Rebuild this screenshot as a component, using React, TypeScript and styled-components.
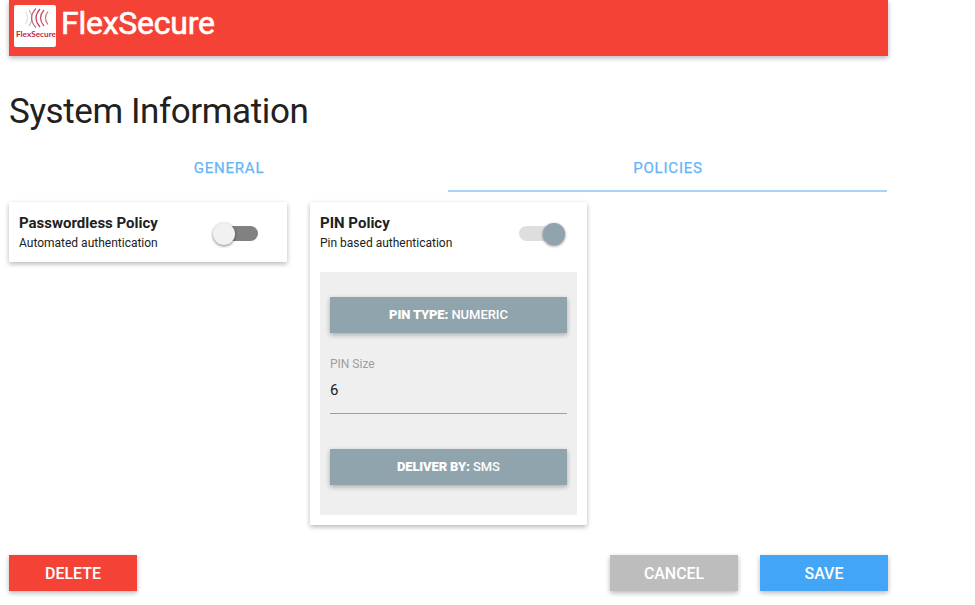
import React, { useState } from "react";
import styled, { createGlobalStyle } from "styled-components";

const GlobalStyle = createGlobalStyle`
  * { box-sizing: border-box; }
  body {
    margin: 0;
    background: #fff;
    color: #212121;
    font-family: Roboto, "Liberation Sans", sans-serif;
    font-size: 15px;
  }
`;

const shadow = "0 2px 5px 0 rgba(0,0,0,0.16), 0 2px 5px 0 rgba(0,0,0,0.14)";

const Page = styled.main`
  display: flex;
  flex-direction: column;
  width: 879px;
  margin-left: 9px;
  padding-bottom: 14px;
`;

const Header = styled.header`
  display: flex;
  height: 56px;
  padding: 5px;
  background: #f44336;
  box-shadow: ${shadow};
`;

const LogoTile = styled.div`
  width: 42px;
  height: 42px;
  background: #fff;
  border-radius: 2px;
  overflow: hidden;
  svg { display: block; }
`;

const Brand = styled.div`
  margin-left: 5px;
  margin-top: -2px;
  font-size: 32px;
  line-height: 40px;
  letter-spacing: -0.25px;
  color: #fff;
  -webkit-text-stroke: 0.6px #fff;
`;

const Title = styled.h1`
  margin: 32px 0 0;
  height: 59px;
  font-size: 35px;
  line-height: 48px;
  font-weight: 400;
  letter-spacing: -0.4px;
`;

const Tabs = styled.nav`
  display: grid;
  grid-template-columns: 439px 439px;
  height: 45px;
`;

const Tab = styled.button<{ $active: boolean }>`
  height: 45px;
  padding: 0 0 0 1px;
  border: 0;
  border-bottom: 2px solid ${(p) => (p.$active ? "#a6d4fa" : "transparent")};
  background: none;
  color: #64b5f6;
  font: 400 15px/41px Roboto, sans-serif;
  letter-spacing: 0.8px;
  -webkit-text-stroke: 0.25px #64b5f6;
`;

const Policies = styled.section`
  display: grid;
  grid-template-columns: 278px 277px;
  column-gap: 23px;
  align-items: start;
  height: 323px;
  margin-top: 10px;
`;

const Card = styled.article`
  padding: 10px;
  background: #fff;
  border-radius: 1px;
  box-shadow: ${shadow};
`;

const CardHead = styled.div<{ $inset: number }>`
  display: flex;
  justify-content: space-between;
  align-items: center;
  height: 40px;
  padding-top: 2px;
  padding-right: ${(p) => p.$inset}px;
`;

const CardName = styled.div`
  font-size: 15px;
  line-height: 20px;
  font-weight: 700;
`;

const CardNote = styled.div`
  font-size: 12px;
  line-height: 20px;
`;

const Track = styled.button<{ $on: boolean }>`
  display: flex;
  align-items: center;
  justify-content: ${(p) => (p.$on ? "flex-end" : "flex-start")};
  width: 40px;
  height: 15px;
  margin-top: 1px;
  padding: 0;
  border: 0;
  border-radius: 15px;
  background: ${(p) => (p.$on ? "#dedede" : "#818181")};
`;

const Thumb = styled.span<{ $on: boolean }>`
  flex: none;
  width: 22px;
  height: 22px;
  margin: ${(p) => (p.$on ? "0 -5.5px 0 0" : "0 0 0 -5.5px")};
  border-radius: 50%;
  background: ${(p) => (p.$on ? "#90a4ae" : "#f1f1f1")};
  box-shadow: 0 1px 3px 0 rgba(0, 0, 0, 0.5);
`;

const Settings = styled.div`
  height: 243px;
  margin-top: 20px;
  padding: 25px 10px 0;
  background: #efefef;
`;

const OptionButton = styled.button`
  display: block;
  width: 100%;
  height: 36px;
  padding: 0;
  border: 0;
  background: #90a4ae;
  box-shadow: ${shadow};
  color: #fff;
  font: 500 13px/36px Roboto, sans-serif;
  letter-spacing: -0.05px;
  b { font-weight: 900; letter-spacing: -0.15px; }
`;

const Field = styled.label`
  display: flex;
  flex-direction: column;
  height: 116px;
  padding-top: 21px;
  color: #9e9e9e;
  font-size: 12px;
  line-height: 20px;
`;

const FieldInput = styled.input`
  height: 40px;
  margin: 0;
  padding: 0 0 8px;
  border: 0;
  border-bottom: 1px solid #9e9e9e;
  border-radius: 0;
  outline: 0;
  background: transparent;
  color: #212121;
  font: 400 15px Roboto, sans-serif;
`;

const Actions = styled.footer`
  display: flex;
  justify-content: space-between;
  margin-top: 30px;
`;

const ActionGroup = styled.div`
  display: flex;
  gap: 22px;
`;

const Action = styled.button<{ $color: string }>`
  width: 128px;
  height: 36px;
  padding: 1px 0 0;
  border: 0;
  background: ${(p) => p.$color};
  box-shadow: ${shadow};
  color: #fff;
  font: 500 16px/35px Roboto, sans-serif;
  letter-spacing: -0.05px;
`;

function Logo() {
  return (
    <LogoTile>
      <svg width="42" height="42" viewBox="0 0 42 42" fill="none" strokeWidth="1.2">
        <path d="M11.5 7q4 5.5 0 12" stroke="#dedede" />
        <path d="M15 5q6 8 0 16" stroke="#bdb5b8" />
        <path d="M22 3.5q-9 9.5 0 19" stroke="#b8667e" />
        <path d="M26 4q-8 9 0 18" stroke="#c54662" />
        <path d="M30 5q-7 8 0 16" stroke="#c74863" />
        <path d="M34 6.5q-5 6.5 0 13" stroke="#ce6c80" />
        <text x="2" y="31.5" fill="#c21f45" fontFamily="Lato, sans-serif" fontSize="8" fontWeight="700" textLength="40" lengthAdjust="spacingAndGlyphs">
          FlexSecure
        </text>
      </svg>
    </LogoTile>
  );
}

function Switch({ initial, label }: { initial: boolean; label: string }) {
  const [on, setOn] = useState(initial);
  return (
    <Track $on={on} role="switch" aria-checked={on} aria-label={label} onClick={() => setOn(!on)}>
      <Thumb $on={on} />
    </Track>
  );
}

export default function App() {
  const [tab, setTab] = useState("POLICIES");
  const [size, setSize] = useState("6");
  return (
    <>
      <GlobalStyle />
      <Page>
        <Header>
          <Logo />
          <Brand>FlexSecure</Brand>
        </Header>
        <Title>System Information</Title>
        <Tabs>
          {["GENERAL", "POLICIES"].map((name) => (
            <Tab key={name} $active={tab === name} onClick={() => setTab(name)}>
              {name}
            </Tab>
          ))}
        </Tabs>
        <Policies>
          <Card>
            <CardHead $inset={19}>
              <div>
                <CardName>Passwordless Policy</CardName>
                <CardNote>Automated authentication</CardNote>
              </div>
              <Switch initial={false} label="Passwordless Policy" />
            </CardHead>
          </Card>
          <Card>
            <CardHead $inset={18}>
              <div>
                <CardName>PIN Policy</CardName>
                <CardNote>Pin based authentication</CardNote>
              </div>
              <Switch initial label="PIN Policy" />
            </CardHead>
            <Settings>
              <OptionButton><b>PIN TYPE:</b> NUMERIC</OptionButton>
              <Field>
                PIN Size
                <FieldInput value={size} onChange={(e) => setSize(e.target.value)} />
              </Field>
              <OptionButton><b>DELIVER BY:</b> SMS</OptionButton>
            </Settings>
          </Card>
        </Policies>
        <Actions>
          <Action $color="#f44336">DELETE</Action>
          <ActionGroup>
            <Action $color="#bdbdbd">CANCEL</Action>
            <Action $color="#42a5f5">SAVE</Action>
          </ActionGroup>
        </Actions>
      </Page>
    </>
  );
}
